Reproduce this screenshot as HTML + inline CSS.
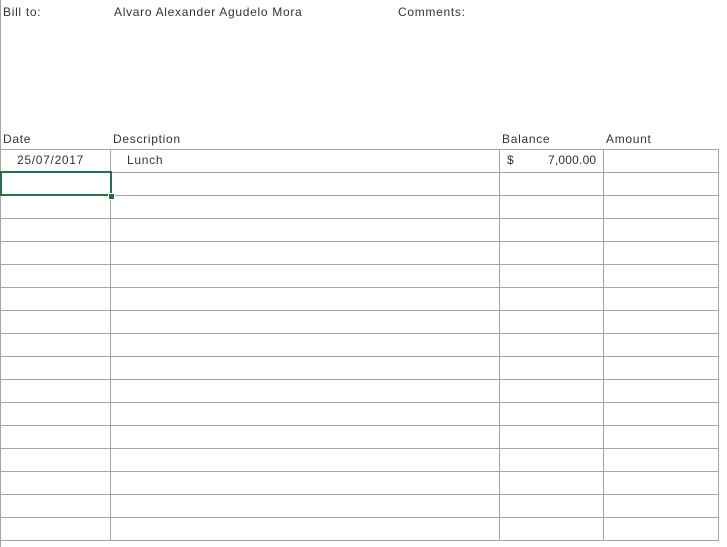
<!DOCTYPE html><html><head><style>
body{margin:0;width:727px;height:547px;background:#fff;position:relative;overflow:hidden;font-family:"Liberation Sans",sans-serif;font-size:12px;color:#333;letter-spacing:0.7px}
.t{position:absolute;white-space:nowrap}
.h{position:absolute;left:0;width:719px;height:1px;background:#a6a6a6}
.v{position:absolute;top:149px;height:392px;width:1px;background:#a6a6a6}
</style></head><body>
<div style="position:absolute;left:0;top:0;width:1px;height:547px;background:#a6a6a6"></div>
<div class="t" style="left:3px;top:5px">Bill to:</div>
<div class="t" style="left:114px;top:5px">Alvaro Alexander Agudelo Mora</div>
<div class="t" style="left:398px;top:5px">Comments:</div>
<div class="t" style="left:3px;top:132px">Date</div>
<div class="t" style="left:113px;top:132px">Description</div>
<div class="t" style="left:502px;top:132px">Balance</div>
<div class="t" style="left:606px;top:132px">Amount</div>
<div class="t" style="left:17px;top:153px">25/07/2017</div>
<div class="t" style="left:127px;top:153px">Lunch</div>
<div class="t" style="left:507px;top:153px">$</div>
<div class="t" style="left:548px;top:153px;letter-spacing:0.2px">7,000.00</div>
<div class="h" style="top:149px"></div><div class="h" style="top:172px"></div><div class="h" style="top:195px"></div><div class="h" style="top:218px"></div><div class="h" style="top:241px"></div><div class="h" style="top:264px"></div><div class="h" style="top:287px"></div><div class="h" style="top:310px"></div><div class="h" style="top:333px"></div><div class="h" style="top:356px"></div><div class="h" style="top:379px"></div><div class="h" style="top:402px"></div><div class="h" style="top:425px"></div><div class="h" style="top:448px"></div><div class="h" style="top:471px"></div><div class="h" style="top:494px"></div><div class="h" style="top:517px"></div><div class="h" style="top:540px"></div>
<div class="v" style="left:110px"></div><div class="v" style="left:499px"></div><div class="v" style="left:603px"></div><div class="v" style="left:718px"></div>
<div style="position:absolute;left:0;top:171px;width:108px;height:21px;border:2px solid #217346"></div>
<div style="position:absolute;left:108px;top:193px;width:5px;height:5px;background:#217346;border:1px solid #fff"></div>
</body></html>
